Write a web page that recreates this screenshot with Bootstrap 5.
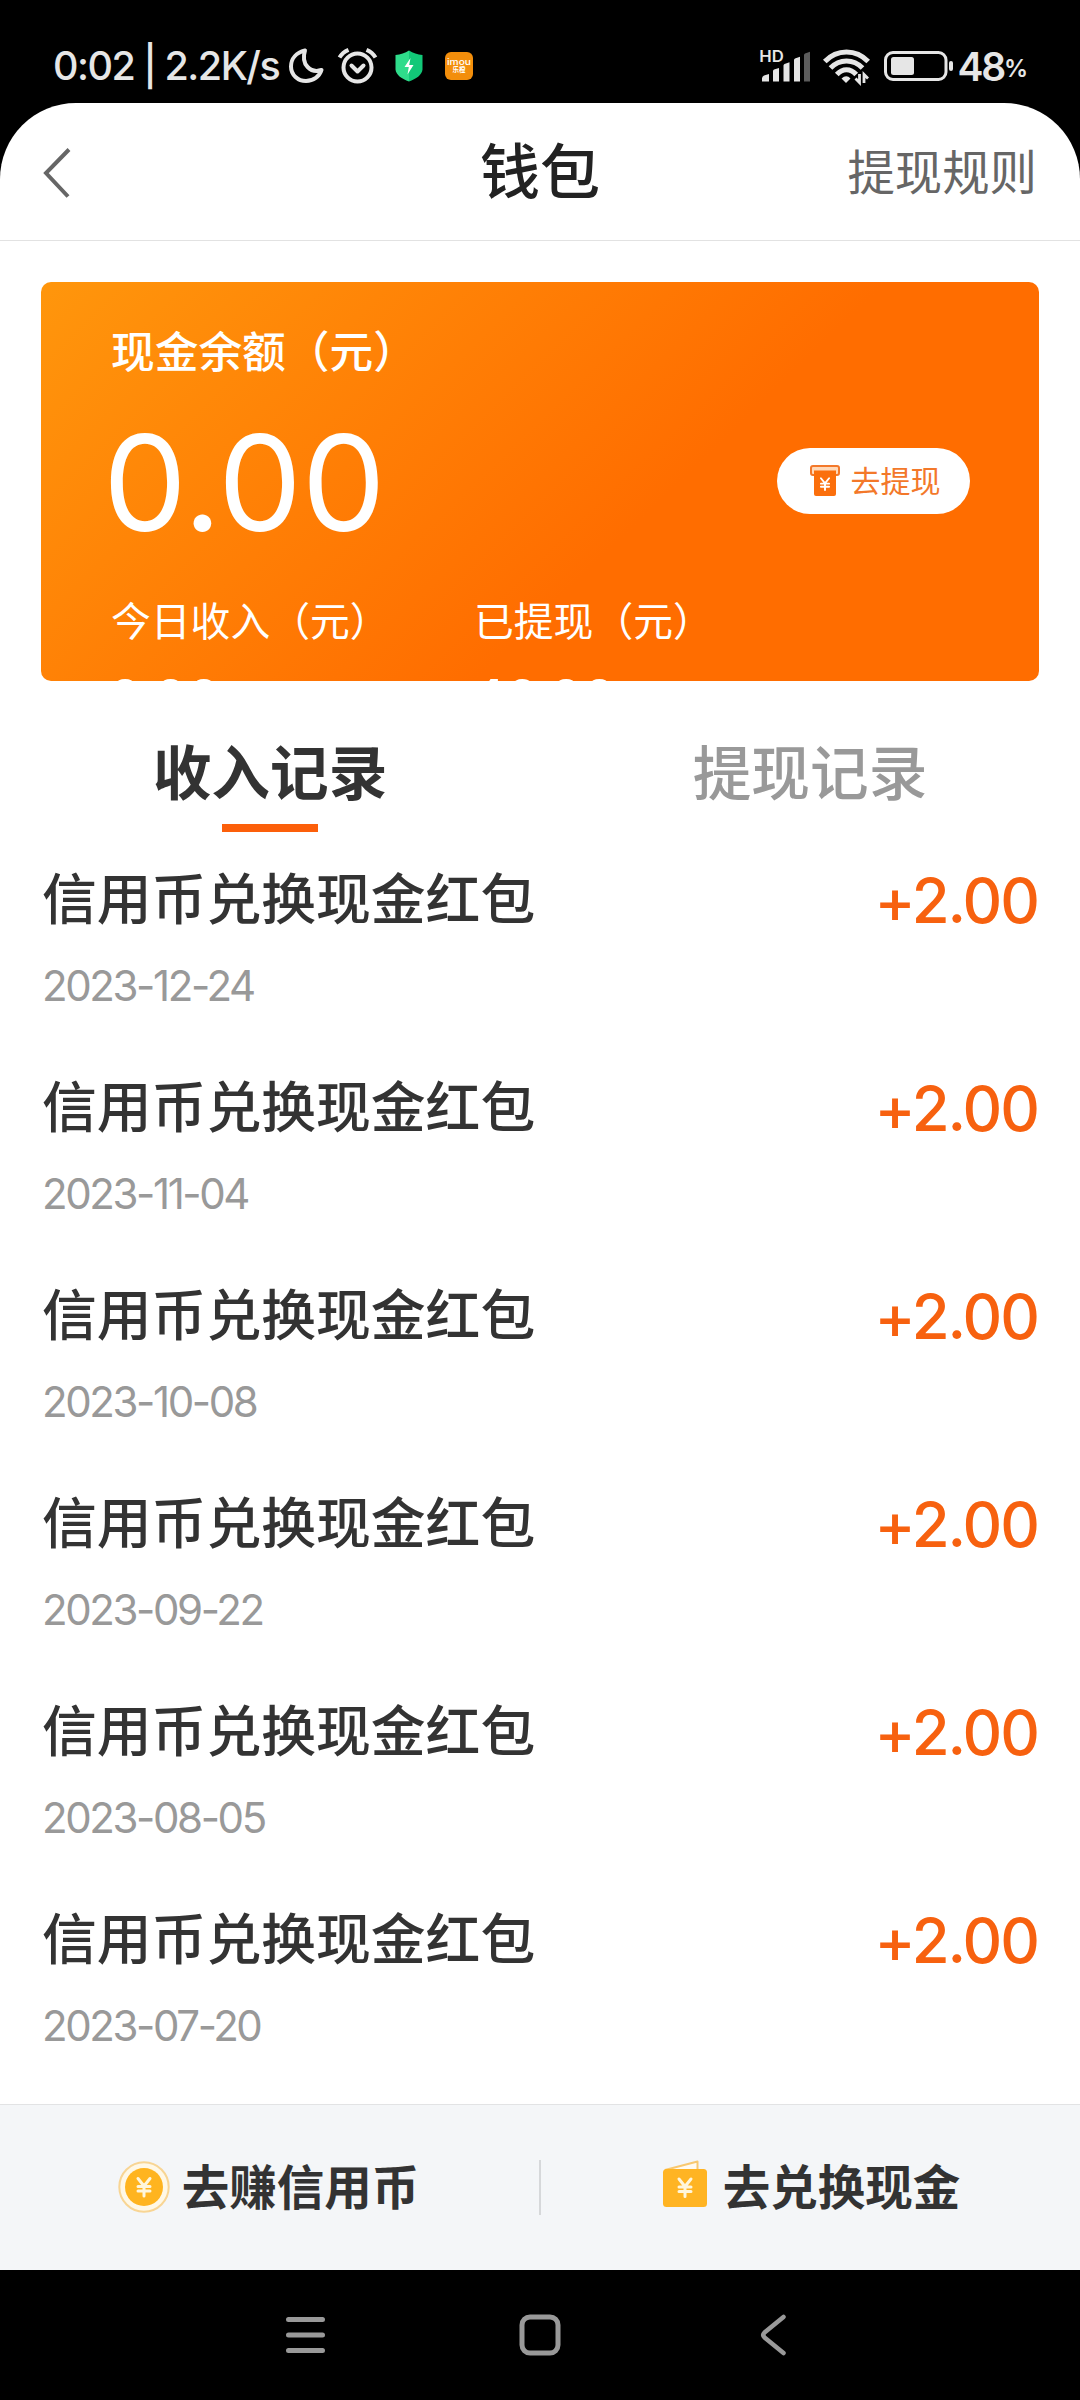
<!DOCTYPE html>
<html lang="zh-CN">
<head>
<meta charset="utf-8">
<meta name="viewport" content="width=device-width, initial-scale=1">
<title>钱包</title>
<link href="https://cdn.jsdelivr.net/npm/bootstrap@5.3.0/dist/css/bootstrap.min.css" rel="stylesheet">
<style>
body{background:#000;color:#333;font-family:Inter,"Noto Sans CJK SC",sans-serif;line-height:1;overflow:hidden}
svg{display:block;flex:none;overflow:visible}
.phone{width:1080px;height:2400px}
.statusbar{height:103px;padding:48px 53px 0;color:#e6e6e6;font-weight:500}
.statusbar>div{height:36px}
.clock{width:236px;font-size:39.5px;letter-spacing:-1.5px;white-space:pre;margin-top:-1px}
.battery-level{font-size:39px;font-weight:600;letter-spacing:-2.3px;margin:-1px 0 0 4px}
.battery-unit{font-size:24px;font-weight:600;letter-spacing:-1px;padding-top:9px}
.app{height:2167px;border-radius:76px 76px 0 0}
.topbar{height:138px;padding:2px 43px 0;border-bottom:1px solid #e2e2e2}
.topbar>*{flex:1 0 0}
.page-title{font-size:60px;font-weight:500;color:#222;padding-bottom:2px}
.rules{font-size:47.4px;color:#666;padding-top:1px}
.wallet{height:399px;margin:41px 41px 0;border-radius:10px;padding:48px 69px 0 70px;color:#fff;background:linear-gradient(136deg,#ff960c 0%,#ff6d00 60%,#ff6d00 100%)}
.wallet-title{font-size:43.7px;font-weight:500;line-height:46px}
.balance-row{margin-top:40px}
.balance{font-size:133px;line-height:133px;letter-spacing:-.2px;margin-left:-8px}
.stats{font-size:39.8px;line-height:44px;margin-top:51px}
.stat-item{width:363px}
.stat-value{font-size:53px;line-height:60px;font-weight:500;margin:25px 0 0 -3px;letter-spacing:-1px}
.cashout{width:193px;height:66px;margin-bottom:3px;font-size:30px;color:#f3782a;gap:11px;padding-left:3px}
.tabs-row{height:153px;font-size:58.7px}
.tab-item{padding-top:64px;gap:20px}
.tab-item.active{font-weight:700}
.tab-item:not(.active){color:#999;font-weight:500}
.tab-line{width:96px;height:8px;background:#fc5f0a}
.record{height:208px;padding:37px 43px 0 42px}
.record-name{font-size:54.8px;font-weight:500;line-height:56px}
.record-date{font-size:42px;line-height:42px;color:#999;margin-top:38px;letter-spacing:-2.4px}
.record-sum{font-size:61.5px;line-height:60px;font-weight:500;color:#f7610f;letter-spacing:-2px;margin-right:-1px}
.actions{height:166px;background:#f4f6f8;border-top:1px solid #e2e3e4;font-size:47.5px;font-weight:700}
.action-item{gap:12px;padding-right:2px}
.split{width:2px;height:55px;background:#d6d8da}
.sysnav{height:130px;padding:0 286px}
</style>
</head>
<body>
<svg width="0" height="0" class="position-absolute"><defs>
  <g id="yen" fill="none" stroke-linecap="round"><path d="M-6-8.500 0-1 6-8.500M0-1V9M-6-.5H6M-6 4H6"/></g>
</defs></svg>
<div class="phone d-flex flex-column">
  <div class="statusbar d-flex justify-content-between">
    <div class="d-flex">
      <span class="clock">0:02 | 2.2K/s</span>
      <svg width="34" height="36" viewBox="0 0 34 36" fill="none" stroke="#e6e6e6" stroke-width="4" stroke-linejoin="round"><path d="M16 2.500C7.500 4.500 2 10.500 2 18.500 2 27 9 33 17 33c7.500 0 13.500-4.500 15.500-11C22 25.500 11.500 17 16 2.500Z"/></svg>
      <svg style="margin-left:15px" width="39" height="36" viewBox="0 0 39 36" fill="none" stroke="#e6e6e6" stroke-width="4"><circle cx="19.500" cy="19.500" r="14"/><path d="M13.500 17.500l6 6 6-6" stroke-linecap="round" stroke-linejoin="round"/><path d="M1.500 9.500C3.500 6 6.500 3.500 10.500 1.800M37.500 9.500C35.500 6 32.500 3.500 28.500 1.800"/></svg>
      <svg style="margin-left:18px" width="28" height="36" viewBox="0 0 28 36"><path d="M14 2.500C10 5 5.500 6.500.5 7v14.500C1 27 7 31 14 33.500Z" fill="#2fdc8b"/><path d="M14 2.500c4 2.500 8.500 4 13.500 4.500v14.500C27 27 21 31 14 33.500Z" fill="#12c878"/><path d="M15.500 10 9.500 19h4.300l-1.300 7.500L18.500 17h-4.300Z" fill="#fff"/></svg>
      <svg style="margin-left:22px" width="28" height="36" viewBox="0 0 28 36"><rect y="4" width="28" height="28" rx="6" fill="#f38e0b"/><text x="14" y="17" font-size="9" font-weight="500" fill="#fff" text-anchor="middle" textLength="24" lengthAdjust="spacingAndGlyphs">imou</text><text x="14" y="24" font-size="6.500" font-weight="700" fill="#fff" text-anchor="middle">乐橙</text></svg>
    </div>
    <div class="d-flex">
      <svg width="50" height="36" viewBox="0 0 50 36" fill="#e6e6e6"><text x="-.8" y="14" font-size="16" font-weight="600" textLength="24.500" lengthAdjust="spacingAndGlyphs">HD</text><path d="M2 33.500v-3q0-2 2-3l5-1.500v7.500ZM13 33.500V23q0-1 1-1.500l5-1.500v13.500ZM23.500 33.500V17.500q0-1 1-1.500l5-1.800v19.300ZM34 33.500V12q0-1 1-1.500l5-1.800v24.800Z"/><path d="M44 33.500V7q0-1 1-1.500l5-1.800v29.800Z" fill="#5c5c5c"/></svg>
      <svg style="margin-left:13px" width="47" height="36" viewBox="0 0 47 36" fill="none" stroke="#e6e6e6" stroke-width="5"><path d="M1.800 13.500C14 .8 33 .8 45.200 13.500M7.500 20C16.500 10.500 30.500 10.500 39.500 20M13.800 26.500C19.500 20 27.500 20 33.200 26.500"/><path d="M18.500 30.500q5-4.500 9 0L23 35Z" fill="#e6e6e6" stroke="none"/><path d="M36.500 26v8.500l-4-4M41 35v-8.500l4 4" stroke-width="2.800"/></svg>
      <svg style="margin-left:14px" width="70" height="36" viewBox="0 0 70 36"><rect x="1.500" y="4.500" width="60.500" height="27" rx="7.500" fill="none" stroke="#e6e6e6" stroke-width="3"/><rect x="7" y="9" width="23" height="18" rx="2.500" fill="#e6e6e6"/><rect x="65" y="13" width="4" height="10" rx="2" fill="#e6e6e6"/></svg>
      <span class="battery-level">48</span><span class="battery-unit">%</span>
    </div>
  </div>
  <main class="app bg-white d-flex flex-column flex-shrink-0">
    <header class="topbar d-flex align-items-center flex-shrink-0">
      <div><svg width="28" height="50" viewBox="0 0 28 50" fill="none" stroke="#666" stroke-width="4"><path d="M26 1.500 3 25 25 48.500"/></svg></div>
      <div class="page-title text-center">钱包</div>
      <div class="rules text-end">提现规则</div>
    </header>
    <section class="wallet overflow-hidden flex-shrink-0">
      <div class="wallet-title">现金余额（元）</div>
      <div class="balance-row d-flex justify-content-between align-items-center">
        <div class="balance">0.00</div>
        <div class="cashout bg-white rounded-pill d-flex align-items-center justify-content-center">
          <svg width="30" height="32" viewBox="0 0 30 32"><rect x="1" y="1" width="28" height="9" rx="2" fill="#ffd9b8" stroke="#f3782a" stroke-width="2"/><path d="M4 5.500H26V29q0 2-2 2H6q-2 0-2-2Z" fill="#fb6f0c"/><use href="#yen" transform="translate(15 19) scale(.68)" stroke="#fff" stroke-width="2.800"/></svg>
          <span>去提现</span>
        </div>
      </div>
      <div class="stats d-flex">
        <div class="stat-item">今日收入（元）<div class="stat-value">0.00</div></div>
        <div class="stat-item">已提现（元）<div class="stat-value">46.00</div></div>
      </div>
    </section>
    <nav class="tabs-row d-flex flex-shrink-0">
      <div class="tab-item active w-50 d-flex flex-column align-items-center">收入记录<span class="tab-line"></span></div>
      <div class="tab-item w-50 d-flex flex-column align-items-center">提现记录</div>
    </nav>
    <div class="flex-grow-1">
      <div class="record d-flex justify-content-between"><div><div class="record-name">信用币兑换现金红包</div><div class="record-date">2023-12-24</div></div><div class="record-sum">+2.00</div></div>
      <div class="record d-flex justify-content-between"><div><div class="record-name">信用币兑换现金红包</div><div class="record-date">2023-11-04</div></div><div class="record-sum">+2.00</div></div>
      <div class="record d-flex justify-content-between"><div><div class="record-name">信用币兑换现金红包</div><div class="record-date">2023-10-08</div></div><div class="record-sum">+2.00</div></div>
      <div class="record d-flex justify-content-between"><div><div class="record-name">信用币兑换现金红包</div><div class="record-date">2023-09-22</div></div><div class="record-sum">+2.00</div></div>
      <div class="record d-flex justify-content-between"><div><div class="record-name">信用币兑换现金红包</div><div class="record-date">2023-08-05</div></div><div class="record-sum">+2.00</div></div>
      <div class="record d-flex justify-content-between"><div><div class="record-name">信用币兑换现金红包</div><div class="record-date">2023-07-20</div></div><div class="record-sum">+2.00</div></div>
    </div>
    <footer class="actions d-flex align-items-center flex-shrink-0">
      <div class="action-item flex-fill d-flex align-items-center justify-content-center">
        <svg width="52" height="52" viewBox="0 0 52 52"><circle cx="26" cy="25" r="24.700" fill="#fff8e6" stroke="#f8d594" stroke-width="2"/><circle cx="26" cy="25" r="19" fill="#ffb41f"/><use href="#yen" transform="translate(26 25)" stroke="#fff6dc" stroke-width="3"/></svg>
        <span>去赚信用币</span>
      </div>
      <div class="split"></div>
      <div class="action-item flex-fill d-flex align-items-center justify-content-center">
        <svg width="52" height="52" viewBox="0 0 52 52"><path d="M6 8 38.500-.5V8" fill="#fffaf0" stroke="#f8c870" stroke-width="2" stroke-linejoin="round"/><rect x="4" y="7" width="44" height="38" rx="3.500" fill="#ffb423"/><use href="#yen" transform="translate(26 25.500)" stroke="#fff6dc" stroke-width="3"/></svg>
        <span>去兑换现金</span>
      </div>
    </footer>
  </main>
  <div class="sysnav d-flex align-items-center justify-content-between">
    <svg width="39" height="42" viewBox="0 0 39 42" stroke="#999" stroke-width="5" stroke-linecap="round"><path d="M2.500 5.500h34M2.500 21h34M2.500 36.500h34"/></svg>
    <svg width="42" height="42" viewBox="0 0 42 42" fill="none" stroke="#999" stroke-width="5"><rect x="0" y="3" width="36" height="36" rx="8"/></svg>
    <svg width="33" height="42" viewBox="0 0 33 42" fill="none" stroke="#999" stroke-width="4.500" stroke-linecap="round" stroke-linejoin="round"><path d="M22.500 3 3.500 18.500q-2.500 2.500 0 5L22.500 39"/></svg>
  </div>
</div>
<script src="https://cdn.jsdelivr.net/npm/bootstrap@5.3.0/dist/js/bootstrap.bundle.min.js"></script>
</body>
</html>
